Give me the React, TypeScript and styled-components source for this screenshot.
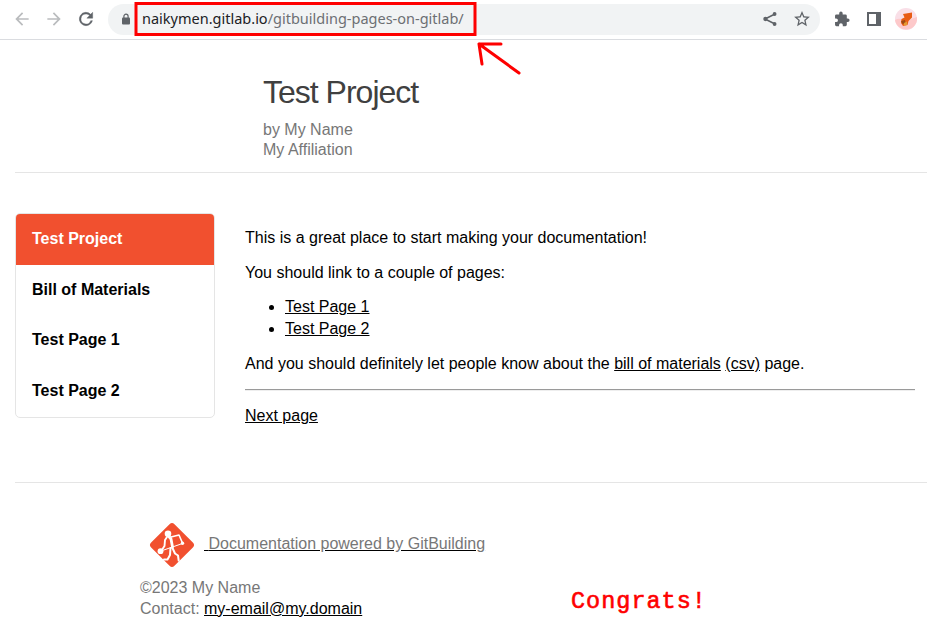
import React from 'react';
import styled, { createGlobalStyle, css } from 'styled-components';

const GlobalStyle = createGlobalStyle`
  * { box-sizing: border-box; }
  body {
    margin: 0;
    background: #fff;
    color: #000;
    font: 16px/22.4px "Liberation Sans", Arial, sans-serif;
    overflow: hidden;
  }
`;

const Screen = styled.div`
  position: relative;
  width: 927px;
  height: 633px;
  overflow: hidden;
`;

const Toolbar = styled.div`
  display: flex;
  align-items: center;
  height: 40px;
  padding: 0 8px 1px 12px;
  border-bottom: 1px solid #dadce0;
`;

const ToolIcon = styled.svg<{ $gap?: number; $tone?: string }>`
  flex: none;
  width: 20px;
  height: 20px;
  margin-right: ${p => p.$gap ?? 12}px;
  fill: ${p => p.$tone ?? '#5f6368'};
`;

const LockIcon = styled.svg`
  flex: none;
  width: 8px;
  height: 12px;
  margin: 0 12px 1px 4px;
`;

const AddressBar = styled.div`
  display: flex;
  align-items: center;
  flex: none;
  width: 712px;
  height: 31px;
  padding: 0 8px 0 10px;
  margin-right: 12px;
  border-radius: 16px;
  background: #f1f3f4;
`;

const Url = styled.span`
  flex: 1;
  padding-bottom: 2px;
  font: 14.5px/20px "Noto Sans", sans-serif;
  color: #202124;
  white-space: nowrap;
`;

const UrlPath = styled.span`
  color: #6c6f73;
`;

const Avatar = styled.svg`
  flex: none;
  width: 22px;
  height: 22px;
`;

const Header = styled.header`
  height: 133px;
  margin-left: 15px;
  padding: 32px 0 0 248px;
  border-bottom: 1px solid #e5e5e5;
  color: #777;
  line-height: 20px;
`;

const Title = styled.h1`
  margin: 0 0 8px;
  color: #404040;
  font-size: 32px;
  font-weight: 400;
  line-height: 40px;
  letter-spacing: -1px;
`;

const Main = styled.div`
  display: flex;
  align-items: flex-start;
  height: 310px;
  margin-left: 15px;
  padding: 40.4px 12px 0 0;
  border-bottom: 1px solid #e5e5e5;
`;

const SideNav = styled.nav`
  flex: none;
  width: 200px;
  margin-right: 30px;
  padding-bottom: 0.8px;
  border: 1px solid #e5e5e5;
  border-radius: 5px;
  overflow: hidden;
`;

const NavItem = styled.a<{ $active?: boolean }>`
  display: block;
  padding: 14px 16px;
  font-weight: 700;
  ${p => p.$active && css`
    background: #f1502f;
    color: #fff;
  `}
`;

const Article = styled.article`
  flex: 1;
  padding-top: 13.8px;
`;

const Paragraph = styled.p`
  margin: 0 0 12px;
`;

const List = styled.ul`
  margin: 0 0 12px;
  padding-left: 40px;
`;

const Rule = styled.hr`
  margin: 14px 0 13.3px;
  border: 0;
  border-top: 1px solid #9a9a9a;
  border-bottom: 1px solid #eee;
`;

const Link = styled.a`
  color: #000;
  text-decoration: underline;
`;

const Footer = styled.footer`
  padding: 38px 0 0 140px;
  color: #777;
  line-height: 20.8px;
`;

const PoweredBy = styled.div`
  display: flex;
  align-items: center;
  height: 48px;
  margin-bottom: 9px;
  padding-left: 8px;
`;

const Logo = styled.svg`
  width: 48px;
  height: 48px;
  margin-right: 8px;
`;

const PoweredLink = styled(Link)`
  margin-top: -1px;
`;

const PoweredText = styled.span`
  color: #777;
`;

const Annotation = styled.svg`
  position: absolute;
  left: 0;
  top: 0;
  width: 560px;
  height: 80px;
  fill: none;
  stroke: #fe0000;
  stroke-width: 3;
  pointer-events: none;
`;

const Note = styled.div`
  position: absolute;
  left: 571px;
  top: 589px;
  color: #fe0000;
  font: 23.500px/26px "Courier New", "Liberation Mono", monospace;
  letter-spacing: 1px;
  -webkit-text-stroke: 0.6px #fe0000;
`;

export default function App() {
  return (
    <Screen>
      <GlobalStyle />
      <Toolbar>
        <ToolIcon viewBox="0 0 24 24" $tone="#babcbe"><path d="M20 11H7.83l5.59-5.59L12 4l-8 8 8 8 1.41-1.41L7.83 13H20z" /></ToolIcon>
        <ToolIcon viewBox="0 0 24 24" $tone="#babcbe"><path d="m12 4-1.41 1.41L16.17 11H4v2h12.17l-5.58 5.59L12 20l8-8z" /></ToolIcon>
        <ToolIcon viewBox="0 0 24 24"><path d="M17.65 6.35A8 8 0 1 0 19.73 14h-2.08A6 6 0 1 1 12 6c1.66 0 3.14.69 4.22 1.78L13 11h7V4z" stroke="#5f6368" strokeWidth=".5" /></ToolIcon>
        <AddressBar>
          <LockIcon viewBox="0 0 8 12">
            <rect y="4.500" width="8" height="7" rx="1" fill="#5f6368" />
            <path d="M1.900 5V3.300a2.100 2.100 0 0 1 4.200 0V5" fill="none" stroke="#5f6368" strokeWidth="1.200" />
          </LockIcon>
          <Url>naikymen.gitlab.io<UrlPath>/gitbuilding-pages-on-gitlab/</UrlPath></Url>
          <ToolIcon viewBox="0 0 24 24">
            <path d="M6 12 18 6M6 12l12 6" fill="none" stroke="#5f6368" strokeWidth="1.800" />
            <circle cx="17.500" cy="6" r="2.300" /><circle cx="6.500" cy="12" r="2.600" /><circle cx="17.500" cy="18" r="2.300" />
          </ToolIcon>
          <ToolIcon viewBox="0 0 24 24" $gap={0}><path transform="translate(.6 .6) scale(.95)" d="m22 9.240-7.190-.62L12 2 9.190 8.630 2 9.240l5.460 4.730L5.820 21 12 17.270 18.180 21l-1.630-7.030zM12 15.400l-3.760 2.270 1-4.280-3.320-2.880 4.380-.38L12 6.100l1.710 4.040 4.380.38-3.320 2.880 1 4.280z" /></ToolIcon>
        </AddressBar>
        <ToolIcon viewBox="0 0 24 24"><path d="M20.500 11H19V7a2 2 0 0 0-2-2h-4V3.500a2.500 2.500 0 0 0-5 0V5H4a2 2 0 0 0-2 2v3.800h1.500a2.700 2.700 0 0 1 0 5.400H2V20a2 2 0 0 0 2 2h3.800v-1.500a2.700 2.700 0 0 1 5.400 0V22H17a2 2 0 0 0 2-2v-4h1.500a2.500 2.500 0 0 0 0-5z" transform="translate(2 2.300) scale(.83)" /></ToolIcon>
        <ToolIcon viewBox="0 0 20 20" $gap={11}><path fillRule="evenodd" d="M3 3h14v14H3zM5 5v10h7V5z" /></ToolIcon>
        <Avatar viewBox="0 0 22 22">
          <circle cx="11" cy="11" r="11" fill="#f9dfe7" />
          <path d="M0 12q5-3 10 1l12-4A11 11 0 0 1 0 12z" fill="#fdc9ca" />
          <path d="m8 6 3-.5L17 4.500v5L13.500 13l-1 4-4.500 1-2-3 .5-4 3-1.500z" fill="#e85d14" />
          <path d="m6 13 4-1 .5 3-3 1z" fill="#9c4a13" />
          <path d="m9 15 3-1.500V17l-3 .8z" fill="#e39a31" />
        </Avatar>
      </Toolbar>
      <Header>
        <Title>Test Project</Title>
        <div>by My Name</div>
        <div>My Affiliation</div>
      </Header>
      <Main>
        <SideNav>
          <NavItem $active>Test Project</NavItem>
          <NavItem>Bill of Materials</NavItem>
          <NavItem>Test Page 1</NavItem>
          <NavItem>Test Page 2</NavItem>
        </SideNav>
        <Article>
          <Paragraph>This is a great place to start making your documentation!</Paragraph>
          <Paragraph>You should link to a couple of pages:</Paragraph>
          <List>
            <li><Link>Test Page 1</Link></li>
            <li><Link>Test Page 2</Link></li>
          </List>
          <Paragraph>And you should definitely let people know about the <Link>bill of materials</Link> <Link>(csv)</Link> page.</Paragraph>
          <Rule />
          <Link>Next page</Link>
        </Article>
      </Main>
      <Footer>
        <PoweredBy>
          <Logo viewBox="0 0 48 48">
            <rect x="7.500" y="7.500" width="33" height="33" rx="3.500" fill="#f1502f" transform="rotate(45 24 24)" />
            <g fill="none" stroke="#fff" strokeLinecap="round" strokeLinejoin="round">
              <path d="M19 16 17 19l-.5 6-2 3" strokeWidth="1.900" />
              <path d="m20.500 15 2.500 3 1.500 8" strokeWidth="2.800" />
              <path d="m23 16 8-2 3.700 8.500" strokeWidth="1.600" />
              <path d="M13 30l21.500-7.500" strokeWidth="1" />
              <path d="m22.500 27-.5 7-2.500 4.500H16M24.500 27l2.500 5.500 3 2 .7 5" strokeWidth="2" />
            </g>
            <circle cx="20" cy="12.800" r="3.300" fill="#fff" />
            <circle cx="12.500" cy="30.200" r="2.900" fill="#fff" />
            <circle cx="34.500" cy="22.300" r="1.700" fill="#fff" />
          </Logo>
          <PoweredLink>&nbsp;<PoweredText>Documentation powered by GitBuilding</PoweredText></PoweredLink>
        </PoweredBy>
        <div>©2023 My Name</div>
        <div>Contact: <Link>my-email@my.domain</Link></div>
      </Footer>
      <Annotation viewBox="0 0 560 80">
        <path d="M136 3.500h339v31H136z" />
        <path d="M519 73 479 44M501 44h-22l3 20" strokeLinecap="round" strokeLinejoin="round" />
      </Annotation>
      <Note>Congrats!</Note>
    </Screen>
  );
}
